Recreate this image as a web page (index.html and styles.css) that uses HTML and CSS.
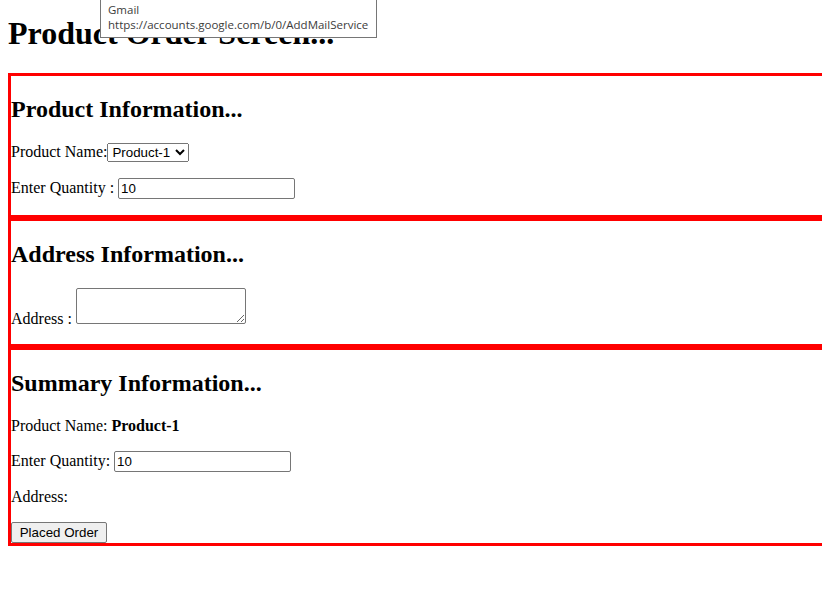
FILE: index.html
```html
<!DOCTYPE html>
<html>
<head>
<meta charset="utf-8">
<title>Product Order</title>
<link rel="stylesheet" href="styles.css">
</head>
<body>
<h1 class="title">Product Order Screen...</h1>
<div class="section">
  <h2 class="section-title">Product Information...</h2>
  <p class="row">Product Name:<select class="ctl-select"><option>Product-1</option><option>Product-2</option></select></p>
  <p class="row">Enter Quantity : <input class="ctl-input" type="text" value="10"></p>
</div>
<div class="section">
  <h2 class="section-title">Address Information...</h2>
  <p class="row">Address : <textarea class="ctl-area"></textarea></p>
</div>
<div class="section">
  <h2 class="section-title">Summary Information...</h2>
  <p class="row">Product Name: <b>Product-1</b></p>
  <p class="row">Enter Quantity: <input class="ctl-input" type="text" value="10"></p>
  <p class="row">Address:</p>
  <button class="ctl-button" type="button">Placed Order</button>
</div>
<div class="tooltip">
  <div class="tooltip-line">Gmail</div>
  <div class="tooltip-line">https://accounts.google.com/b/0/AddMailService</div>
</div>
</body>
</html>
```

FILE: styles.css
```css
body {
  margin: 8px;
  font-family: "Liberation Serif", "Times New Roman", serif;
  font-size: 16px;
  color: #000;
  background: #fff;
}
.title {
  font-size: 32px;
  font-weight: bold;
  margin: 7px 0 21.44px;
}
.section {
  border: 3px solid #ff0000;
  border-right: 0;
  margin-right: -8px;
}
.section-title {
  font-size: 24px;
  font-weight: bold;
  margin: 19.92px 0;
}
.row {
  margin: 16px 0;
}
.ctl-select,
.ctl-input,
.ctl-button {
  font-family: "Liberation Sans", Arial, sans-serif;
  font-size: 13.333px;
}
.ctl-select {
  width: 82px;
}
.ctl-input {
  box-sizing: border-box;
  height: 21px;
  width: 177px;
  padding: 1px 2px;
  border: 1px solid #767676;
  border-radius: 2px;
}
.ctl-area {
  width: 170px;
  height: 36px;
  box-sizing: border-box;
  border: 1px solid #767676;
  border-radius: 2px;
  font-family: "Liberation Mono", monospace;
  font-size: 13.333px;
}
.ctl-button {
  height: 21px;
  width: 96px;
  padding: 1px 6px;
  border: 1px solid #767676;
  border-radius: 2px;
  background: #efefef;
  color: #000;
}
.tooltip {
  position: absolute;
  left: 100px;
  top: -2px;
  width: 277px;
  height: 40px;
  box-sizing: border-box;
  padding: 3px 7px;
  background: #fff;
  border: 1px solid #767676;
  font-family: "Open Sans", "Noto Sans", sans-serif;
  font-size: 11.5px;
  line-height: 15px;
  color: #3c3c3c;
}
```
